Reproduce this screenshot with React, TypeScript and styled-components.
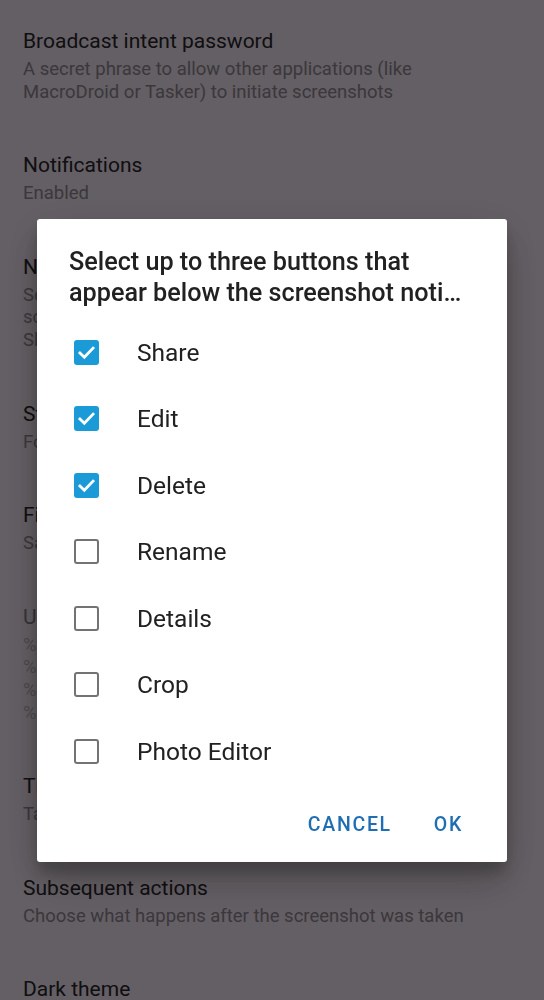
import React, { useState } from "react";
import styled, { createGlobalStyle } from "styled-components";

const Global = createGlobalStyle`
  html, body { margin: 0; padding: 0; }
  body {
    font-family: Roboto, "Noto Sans", "Liberation Sans", sans-serif;
    background: #f9edf9;
    overflow: hidden;
  }
`;

const Page = styled.div`
  width: 544px;
  height: 1000px;
  background: #f9edf9;
  padding-top: 3px;
  box-sizing: border-box;
  overflow: hidden;
`;

const Item = styled.div<{ $disabled?: boolean }>`
  padding: 24px 23px;
  display: flex;
  flex-direction: column;
  gap: 3px;
  opacity: ${(p) => (p.$disabled ? 0.55 : 1)};
`;

const ItemTitle = styled.div`
  font-size: 21px;
  line-height: 28px;
  color: #2a262b;
  white-space: nowrap;
`;

const ItemSummary = styled.div`
  font-size: 18.5px;
  line-height: 22.6px;
  color: #948b95;
  white-space: nowrap;
`;

const Scrim = styled.div`
  position: fixed;
  inset: 0;
  background: rgba(0, 0, 0, 0.6);
  display: flex;
  align-items: flex-start;
  justify-content: center;
  padding-top: 219px;
`;

const Dialog = styled.div`
  width: 470px;
  background: #ffffff;
  border-radius: 3px;
  box-shadow: 0 11px 15px rgba(0, 0, 0, 0.2), 0 24px 38px rgba(0, 0, 0, 0.14),
    0 9px 46px rgba(0, 0, 0, 0.12);
  display: flex;
  flex-direction: column;
`;

const DialogTitle = styled.div`
  margin: 27px 44px 0 32px;
  font-size: 25.2px;
  font-weight: 500;
  line-height: 31px;
  color: #212121;
`;

const TitleLine = styled.div`
  white-space: nowrap;
  overflow: hidden;
  text-overflow: ellipsis;
`;

const List = styled.div`
  margin-top: 11px;
  display: flex;
  flex-direction: column;
`;

const Row = styled.label`
  height: 66.5px;
  display: flex;
  align-items: center;
  padding-left: 37px;
  gap: 38px;
  cursor: pointer;
`;

const Box = styled.span<{ $checked: boolean }>`
  width: 25px;
  height: 25px;
  box-sizing: border-box;
  border-radius: 3px;
  flex: none;
  display: flex;
  align-items: center;
  justify-content: center;
  background: ${(p) => (p.$checked ? "#1b9ad8" : "transparent")};
  border: ${(p) => (p.$checked ? "none" : "2.5px solid #737373")};
`;

const Label = styled.span`
  font-size: 24.5px;
  color: #212121;
`;

const Actions = styled.div`
  display: flex;
  justify-content: flex-end;
  padding: 16px 23px 13px;
`;

const TextButton = styled.button`
  height: 48px;
  padding: 0 21px;
  border: none;
  background: none;
  font-family: inherit;
  font-size: 19.5px;
  font-weight: 500;
  letter-spacing: 1.7px;
  color: #1f6db3;
  cursor: pointer;
`;

const Check = () => (
  <svg width="21" height="21" viewBox="0 0 24 24">
    <path
      d="M4.5 12.5l5 5L19.5 7"
      fill="none"
      stroke="#fff"
      strokeWidth="3.2"
      strokeLinecap="square"
    />
  </svg>
);

const items: { title: string; lines: string[]; disabled?: boolean }[] = [
  {
    title: "Broadcast intent password",
    lines: [
      "A secret phrase to allow other applications (like",
      "MacroDroid or Tasker) to initiate screenshots",
    ],
  },
  { title: "Notifications", lines: ["Enabled"] },
  {
    title: "Notification actions",
    lines: [
      "Select up to three buttons that appear below the",
      "screenshot notification",
      "Share, Edit, Delete",
    ],
  },
  { title: "Storage location", lines: ["Folder: /Pictures/Screenshots"] },
  { title: "File format", lines: ["Save screenshots as .png"] },
  {
    title: "Use custom filename",
    disabled: true,
    lines: [
      "%timestamp% – date and time",
      "%counter% – incrementing number",
      "%random% – random string",
      "%randint% – random number",
    ],
  },
  { title: "Tile action", lines: ["Take screenshot after a short delay"] },
  {
    title: "Subsequent actions",
    lines: ["Choose what happens after the screenshot was taken"],
  },
  { title: "Dark theme", lines: ["Follow system setting"] },
];

const options = ["Share", "Edit", "Delete", "Rename", "Details", "Crop", "Photo Editor"];

export default function App() {
  const [checked, setChecked] = useState<boolean[]>([true, true, true, false, false, false, false]);
  const toggle = (i: number) =>
    setChecked((c) => c.map((v, j) => (j === i ? !v : v)));

  return (
    <>
      <Global />
      <Page>
        {items.map((it) => (
          <Item key={it.title} $disabled={it.disabled}>
            <ItemTitle>{it.title}</ItemTitle>
            <ItemSummary>
              {it.lines.map((l, i) => (
                <div key={i}>{l}</div>
              ))}
            </ItemSummary>
          </Item>
        ))}
      </Page>
      <Scrim>
        <Dialog>
          <DialogTitle>
            <TitleLine>Select up to three buttons that</TitleLine>
            <TitleLine>appear below the screenshot notification</TitleLine>
          </DialogTitle>
          <List>
            {options.map((o, i) => (
              <Row key={o} onClick={() => toggle(i)}>
                <Box $checked={checked[i]}>{checked[i] && <Check />}</Box>
                <Label>{o}</Label>
              </Row>
            ))}
          </List>
          <Actions>
            <TextButton>CANCEL</TextButton>
            <TextButton>OK</TextButton>
          </Actions>
        </Dialog>
      </Scrim>
    </>
  );
}
